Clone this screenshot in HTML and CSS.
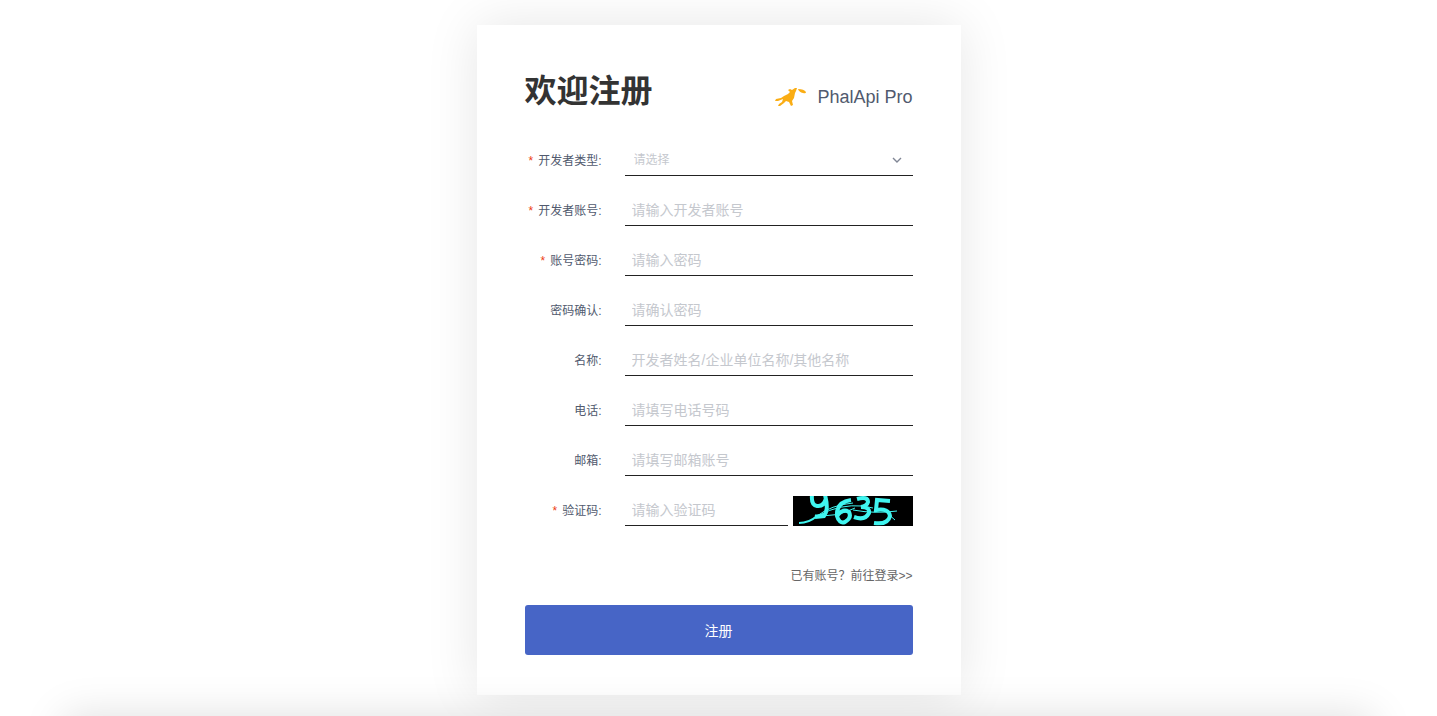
FILE: index.html
```html
<!DOCTYPE html>
<html lang="zh-CN">
<head>
<meta charset="UTF-8">
<meta name="viewport" content="width=device-width, initial-scale=1.0">
<title>欢迎注册 - PhalApi Pro</title>
<link rel="stylesheet" href="styles.css">
</head>
<body>
<main class="page">
  <form class="register">
    <header class="register-header">
      <h1>欢迎注册</h1>
      <div class="brand">
        <svg class="brand-logo" viewBox="0 0 32 20" aria-hidden="true">
          <path d="M13 3 L15 2 L17 3 L20 1 L22 1 L21 4 L20 6 L19 11 L17 14 L18 18 L16 19 L14 15 L11 14 L9 16 L5 19 L3 19 L4 17 L7 15 L8 12 L3 14 L0 14 L1 12 L6 11 L9 9 L13 7 L15 5 Z"/>
          <path d="M23 2 Q29 2 31 5 Q31 7 28 6 Q24 5 23 2 Z"/>
        </svg>
        <span>PhalApi Pro</span>
      </div>
    </header>

    <div class="form-item">
      <label class="required" for="type">开发者类型:</label>
      <div class="control select-box">
        <select id="type" required>
          <option value="" selected>请选择</option>
          <option value="person">个人</option>
          <option value="company">企业</option>
        </select>
        <svg class="arrow" viewBox="0 0 10 6" aria-hidden="true"><path d="M1 1 L5 5 L9 1"/></svg>
      </div>
    </div>
    <div class="form-item">
      <label class="required" for="account">开发者账号:</label>
      <input class="control" type="text" id="account" placeholder="请输入开发者账号">
    </div>
    <div class="form-item">
      <label class="required" for="password">账号密码:</label>
      <input class="control" type="password" id="password" placeholder="请输入密码">
    </div>
    <div class="form-item">
      <label for="confirm">密码确认:</label>
      <input class="control" type="password" id="confirm" placeholder="请确认密码">
    </div>
    <div class="form-item">
      <label for="name">名称:</label>
      <input class="control" type="text" id="name" placeholder="开发者姓名/企业单位名称/其他名称">
    </div>
    <div class="form-item">
      <label for="phone">电话:</label>
      <input class="control" type="tel" id="phone" placeholder="请填写电话号码">
    </div>
    <div class="form-item">
      <label for="email">邮箱:</label>
      <input class="control" type="email" id="email" placeholder="请填写邮箱账号">
    </div>
    <div class="form-item">
      <label class="required" for="code">验证码:</label>
      <input class="control" type="text" id="code" placeholder="请输入验证码">
      <svg class="captcha" viewBox="0 0 120 30" role="img" aria-label="验证码">
        <path class="digit" d="M19 -1 Q18 9 24 10 Q31 11 33 2 M32 -1 Q36 14 31 20 L22 21"/>
        <path class="digit" d="M58 4 Q43 6 44 20 Q46 28 52 26 Q59 22 56 16 Q50 12 44 20"/>
        <path class="digit" d="M64 3 Q75 0 75 6 Q74 10 68 11 Q77 11 76 17 Q72 25 61 21"/>
        <path class="digit" d="M97 5 L84 4 L83 14 Q96 12 97 20 Q95 29 81 27"/>
        <path class="line thick" d="M6 27 Q16 27 24 20 L34 17"/>
        <path class="line" d="M24 20 Q38 9 60 7 M22 19 Q42 22 62 12 M27 19 Q46 8 70 10 L80 12 M60 14 Q82 18 104 15 M94 17 L102 24"/>
      </svg>
    </div>

    <p class="login-link"><a href="#">已有账号？前往登录&gt;&gt;</a></p>
    <button class="submit" type="submit">注册</button>
  </form>
</main>
<div class="bottom-panel"></div>
</body>
</html>
```

FILE: styles.css
```css
* {
  box-sizing: border-box;
}

body {
  margin: 0;
  height: 100vh;
  overflow: hidden;
  background-color: #fff;
  color: #515a6e;
  font-family: "Liberation Sans", "Noto Sans CJK SC", sans-serif;
  font-size: 12px;
}

.page {
  padding: 25px 0 21px;
}

.register {
  max-width: 484px;
  margin: 0 auto;
  padding: 40px 48px;
  background-color: #fff;
  box-shadow: 0 0 50px rgba(0, 0, 0, 0.1);
}

.register-header {
  display: flex;
  justify-content: space-between;
  align-items: center;
  height: 52px;
  margin-bottom: 23px;
}

h1 {
  margin: 0;
  color: #333;
  font-size: 32px;
  line-height: 52px;
  font-weight: bold;
}

.brand {
  display: flex;
  align-items: center;
  gap: 10px;
  padding-top: 12px;
  font-size: 18px;
}

.brand-logo {
  width: 32px;
  height: 20px;
  fill: #faad14;
}

.form-item {
  display: flex;
  align-items: flex-end;
  height: 36px;
  margin-bottom: 14px;
}

label {
  flex: none;
  width: 77px;
  margin-right: 23px;
  line-height: 30px;
  text-align: right;
}

.required::before {
  content: "*";
  margin-right: 5px;
  color: #ed4014;
}

.control {
  flex: 1;
  min-width: 0;
  height: 36px;
  padding: 4px 7px 0;
  border: 0;
  border-bottom: 1px solid #222;
  border-radius: 0;
  outline: none;
  background: none;
  color: #515a6e;
  font-family: inherit;
  font-size: 14px;
}

.control::placeholder {
  color: #c5c8ce;
}

.select-box {
  display: flex;
  align-items: center;
  position: relative;
}

select {
  width: 100%;
  height: 30px;
  padding: 0 2px;
  border: 0;
  outline: none;
  background: none;
  appearance: none;
  color: #c5c8ce;
  font-family: inherit;
  font-size: 12px;
}

.arrow {
  position: absolute;
  right: 11px;
  width: 10px;
  height: 6px;
  fill: none;
  stroke: #808695;
  stroke-width: 1.4;
  pointer-events: none;
}

.captcha {
  flex: none;
  width: 120px;
  height: 30px;
  margin-left: 5px;
  background-color: #000;
  fill: none;
  stroke: #40f5f0;
}

.captcha .digit {
  stroke-width: 4;
}

.captcha .line {
  stroke-width: 1;
}

.captcha .thick {
  stroke-width: 2;
}

.login-link {
  margin: 40px 0 19px;
  line-height: 20px;
  text-align: right;
}

.login-link a {
  color: #666;
  text-decoration: none;
}

.submit {
  display: block;
  width: 100%;
  height: 50px;
  border: 0;
  border-radius: 3px;
  background-color: #4765c6;
  color: #fff;
  font-family: inherit;
  font-size: 14px;
  cursor: pointer;
}

.bottom-panel {
  position: relative;
  height: 200px;
  margin: 0 64px;
  background-color: #fff;
  box-shadow: 0 0 40px rgba(0, 0, 0, 0.13);
}
```
